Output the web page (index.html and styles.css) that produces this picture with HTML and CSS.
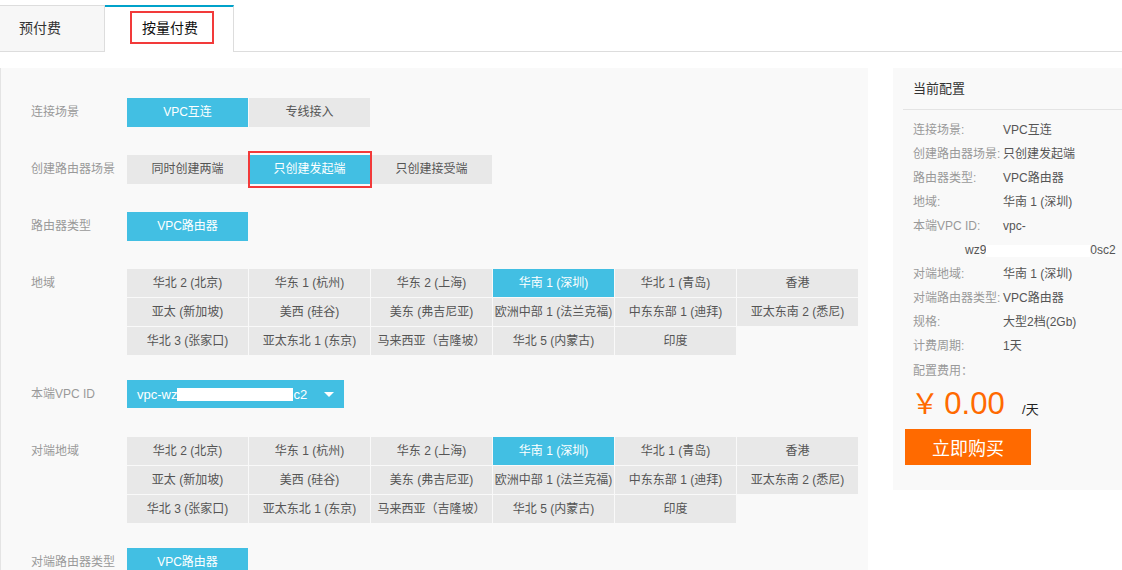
FILE: index.html
```html
<!DOCTYPE html>
<html lang="zh-CN">

<head>
    <meta charset="UTF-8">
    <meta name="viewport" content="width=device-width, initial-scale=1.0">
    <title>按量付费</title>
    <link rel="stylesheet" href="styles.css">
</head>

<body>
    <div class="tabs">
        <div class="tab">预付费</div>
        <div class="tab active"><span class="mark-tab">按量付费</span></div>
        <div class="tab-rest"></div>
    </div>

    <div class="content">
        <div class="form">
            <div class="row">
                <div class="label">连接场景</div>
                <div class="options">
                    <span class="opt on">VPC互连</span>
                    <span class="opt">专线接入</span>
                </div>
            </div>

            <div class="row">
                <div class="label">创建路由器场景</div>
                <div class="options">
                    <span class="opt">同时创建两端</span>
                    <span class="opt on marked">只创建发起端</span>
                    <span class="opt">只创建接受端</span>
                </div>
            </div>

            <div class="row">
                <div class="label">路由器类型</div>
                <div class="options">
                    <span class="opt on">VPC路由器</span>
                </div>
            </div>

            <div class="row grid-row">
                <div class="label">地域</div>
                <div class="regions">
                    <span class="cell">华北 2 (北京)</span>
                    <span class="cell">华东 1 (杭州)</span>
                    <span class="cell">华东 2 (上海)</span>
                    <span class="cell on">华南 1 (深圳)</span>
                    <span class="cell">华北 1 (青岛)</span>
                    <span class="cell">香港</span>
                    <span class="cell">亚太 (新加坡)</span>
                    <span class="cell">美西 (硅谷)</span>
                    <span class="cell">美东 (弗吉尼亚)</span>
                    <span class="cell">欧洲中部 1 (法兰克福)</span>
                    <span class="cell">中东东部 1 (迪拜)</span>
                    <span class="cell">亚太东南 2 (悉尼)</span>
                    <span class="cell">华北 3 (张家口)</span>
                    <span class="cell">亚太东北 1 (东京)</span>
                    <span class="cell">马来西亚（吉隆坡）</span>
                    <span class="cell">华北 5 (内蒙古)</span>
                    <span class="cell">印度</span>
                </div>
            </div>

            <div class="row select-row">
                <div class="label">本端VPC ID</div>
                <div class="select">
                    <span>vpc-wz</span><span class="hidden-id"></span><span>c2</span>
                    <span class="caret"></span>
                </div>
            </div>

            <div class="row grid-row">
                <div class="label">对端地域</div>
                <div class="regions">
                    <span class="cell">华北 2 (北京)</span>
                    <span class="cell">华东 1 (杭州)</span>
                    <span class="cell">华东 2 (上海)</span>
                    <span class="cell on">华南 1 (深圳)</span>
                    <span class="cell">华北 1 (青岛)</span>
                    <span class="cell">香港</span>
                    <span class="cell">亚太 (新加坡)</span>
                    <span class="cell">美西 (硅谷)</span>
                    <span class="cell">美东 (弗吉尼亚)</span>
                    <span class="cell">欧洲中部 1 (法兰克福)</span>
                    <span class="cell">中东东部 1 (迪拜)</span>
                    <span class="cell">亚太东南 2 (悉尼)</span>
                    <span class="cell">华北 3 (张家口)</span>
                    <span class="cell">亚太东北 1 (东京)</span>
                    <span class="cell">马来西亚（吉隆坡）</span>
                    <span class="cell">华北 5 (内蒙古)</span>
                    <span class="cell">印度</span>
                </div>
            </div>

            <div class="row">
                <div class="label">对端路由器类型</div>
                <div class="options">
                    <span class="opt on">VPC路由器</span>
                </div>
            </div>
        </div>

        <div class="summary">
            <div class="summary-title">当前配置</div>
            <ul class="summary-list">
                <li><span class="key">连接场景:</span>VPC互连</li>
                <li><span class="key">创建路由器场景:</span>只创建发起端</li>
                <li><span class="key">路由器类型:</span>VPC路由器</li>
                <li><span class="key">地域:</span>华南 1 (深圳)</li>
                <li><span class="key">本端VPC ID:</span>vpc-</li>
                <li class="wrap">wz9<span class="hidden-id small"></span>0sc2</li>
                <li><span class="key">对端地域:</span>华南 1 (深圳)</li>
                <li><span class="key">对端路由器类型:</span>VPC路由器</li>
                <li><span class="key">规格:</span>大型2档(2Gb)</li>
                <li><span class="key">计费周期:</span>1天</li>
                <li class="fee-label"><span class="key">配置费用：</span></li>
            </ul>
            <div class="price">
                <span class="yuan">￥</span>
                <span class="amount">0.00</span>
                <span class="unit">/天</span>
            </div>
            <button class="buy">立即购买</button>
        </div>
    </div>
</body>

</html>
```

FILE: styles.css
```css
* {
    margin: 0;
    padding: 0;
    box-sizing: border-box;
}

body {
    background: #fff;
    font-family: "Liberation Sans", "Noto Sans CJK SC", sans-serif;
    font-size: 12px;
    color: #555;
}

/* tabs */
.tabs {
    display: flex;
    height: 47px;
    margin-top: 5px;
}

.tab {
    height: 47px;
    line-height: 45px;
    font-size: 14px;
    color: #333;
    background-color: #f7f7f7;
    border-top: 1px solid #ddd;
    border-right: 1px solid #ddd;
    border-bottom: 1px solid #ddd;
    padding: 0 43px 0 19px;
}

.tab.active {
    display: flex;
    align-items: center;
    background-color: #fff;
    color: #111;
    border-top: 2px solid #00a2ca;
    border-bottom: none;
    padding: 0 35px 3px 37px;
}

.mark-tab {
    position: relative;
    display: block;
    height: 20px;
    line-height: 20px;
}

.mark-tab::after {
    content: "";
    position: absolute;
    left: -12px;
    right: -16px;
    top: -7px;
    bottom: -6px;
    border: 2px solid #f23a3a;
}

.tab-rest {
    flex: 1;
    border-bottom: 1px solid #ddd;
}

/* main area */
.content {
    display: flex;
    align-items: flex-start;
    margin-top: 16px;
}

.form {
    width: 868px;
    height: 520px;
    background-color: #f9f9f9;
    border-left: 1px solid #e4e4e4;
    padding: 30px 0 0 30px;
}

.row {
    display: flex;
    margin-bottom: 28px;
}

.grid-row {
    margin-bottom: 25px;
}

.select-row {
    margin-bottom: 29px;
}

.label {
    width: 96px;
    line-height: 29px;
    color: #999;
}

.grid-row .label,
.select-row .label {
    line-height: 28px;
}

.options {
    display: flex;
    gap: 1px;
}

.opt {
    width: 121px;
    height: 29px;
    line-height: 29px;
    text-align: center;
    background-color: #e8e8e8;
    color: #555;
}

.opt.on,
.cell.on {
    background-color: #42bfe3;
    color: #fff;
}

.marked {
    position: relative;
}

.marked::after {
    content: "";
    position: absolute;
    left: -1px;
    right: -2px;
    top: -4px;
    bottom: -4px;
    border: 2px solid #f23a3a;
}

.regions {
    display: grid;
    grid-template-columns: repeat(6, 121px);
    gap: 1px;
}

.cell {
    height: 28px;
    line-height: 28px;
    text-align: center;
    background-color: #e8e8e8;
    color: #555;
    white-space: nowrap;
}

.select {
    display: flex;
    align-items: center;
    width: 217px;
    height: 28px;
    padding-left: 10px;
    background-color: #42bfe3;
    color: #fff;
    font-size: 13px;
}

.hidden-id {
    display: inline-block;
    width: 116px;
    height: 13px;
    background-color: #fff;
}

.caret {
    margin-left: auto;
    margin-right: 10px;
    width: 0;
    height: 0;
    border-left: 5px solid transparent;
    border-right: 5px solid transparent;
    border-top: 5px solid #fff;
}

/* summary */
.summary {
    width: 229px;
    height: 422px;
    margin-left: 25px;
    background-color: #f9f9f9;
}

.summary-title {
    margin-left: 10px;
    padding-left: 10px;
    height: 42px;
    line-height: 41px;
    font-size: 13px;
    color: #333;
    border-bottom: 1px solid #e4e4e4;
}

.summary-list {
    list-style: none;
    padding: 8px 0 0 20px;
}

.summary-list li {
    height: 24px;
    line-height: 24px;
    white-space: nowrap;
    color: #555;
}

.key {
    display: inline-block;
    width: 90px;
    color: #999;
}

.summary-list .wrap {
    padding-left: 52px;
}

.hidden-id.small {
    width: 104px;
    height: 12px;
    vertical-align: middle;
}

.summary-list .fee-label {
    margin-top: 1px;
}

.price {
    padding-left: 18px;
    height: 38px;
    line-height: 38px;
    color: #ff6a00;
}

.yuan {
    font-size: 28px;
    font-family: "Noto Sans CJK SC", sans-serif;
}

.amount {
    font-size: 31px;
    margin-left: 2px;
}

.unit {
    font-size: 13px;
    color: #222;
    margin-left: 14px;
}

.buy {
    display: block;
    width: 126px;
    height: 36px;
    margin: 8px 0 0 12px;
    border: none;
    background-color: #ff6a00;
    color: #fff;
    font-family: "Noto Sans CJK SC", sans-serif;
    font-size: 18px;
}
```
